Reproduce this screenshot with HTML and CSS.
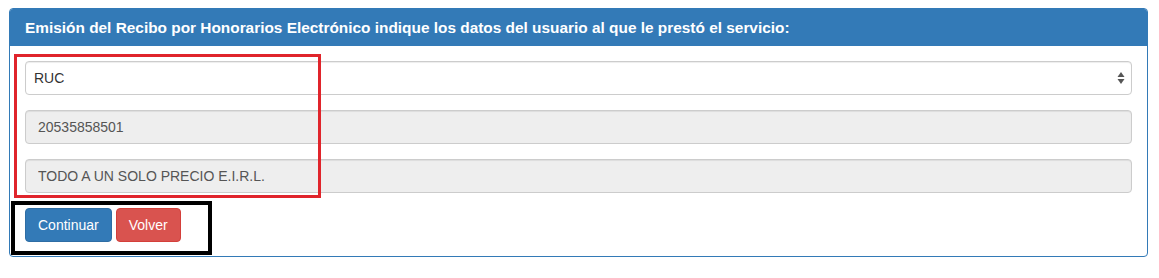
FILE: index.html
```html
<!DOCTYPE html>
<html lang="es">
<head>
<meta charset="utf-8">
<title>Emisión del Recibo por Honorarios Electrónico</title>
<link rel="stylesheet" href="styles.css">
</head>
<body>
<div class="page">
  <div class="panel">
    <div class="panel-heading">Emisión del Recibo por Honorarios Electrónico indique los datos del usuario al que le prestó el servicio:</div>
    <div class="panel-body">
      <div class="form-group select-wrap">
        <select class="form-control select">
          <option>RUC</option>
        </select>
        <svg class="select-arrows" width="8" height="14" viewBox="0 0 8 14"><path d="M4 1 L7.5 6 L0.5 6 Z" fill="#555"/><path d="M4 13 L7.5 8 L0.5 8 Z" fill="#555"/></svg>
      </div>
      <div class="form-group">
        <input class="form-control" type="text" value="20535858501" disabled>
      </div>
      <div class="form-group">
        <input class="form-control" type="text" value="TODO A UN SOLO PRECIO E.I.R.L." disabled>
      </div>
      <div class="actions">
        <button class="btn btn-primary">Continuar</button>
        <button class="btn btn-danger">Volver</button>
      </div>
    </div>
  </div>
  <div class="mark mark-red"></div>
  <div class="mark mark-black"></div>
</div>
</body>
</html>
```
FILE: styles.css
```css
* { box-sizing: border-box; }
html, body { margin: 0; padding: 0; background: #fff; }
body {
  font-family: "Liberation Sans", Arial, Helvetica, sans-serif;
  font-size: 14px;
  color: #555;
}
.page {
  position: relative;
  width: 1159px;
  height: 278px;
  padding: 8px 11px 0 9px;
}
.panel {
  border: 1px solid #337ab7;
  border-radius: 4px;
  background: #fff;
}
.panel-heading {
  background: #337ab7;
  color: #fff;
  font-weight: bold;
  font-size: 15.4px;
  line-height: 17px;
  padding: 10px 15px 10px 15px;
  border-top-left-radius: 3px;
  border-top-right-radius: 3px;
}
.panel-body {
  padding: 15px 15px 14px 15px;
}
.form-group {
  margin-bottom: 15px;
}
.select-wrap { position: relative; }
.form-control {
  display: block;
  width: 100%;
  height: 34px;
  padding: 6px 12px;
  font-family: "Liberation Sans", Arial, Helvetica, sans-serif;
  font-size: 14px;
  line-height: 20px;
  color: #555;
  background: #fff;
  border: 1px solid #ccc;
  border-radius: 4px;
  box-shadow: inset 0 1px 1px rgba(0,0,0,.075);
  margin: 0;
}
.select {
  -webkit-appearance: none;
  appearance: none;
  padding-left: 8px;
  color: #333;
}
.select-arrows {
  position: absolute;
  right: 7px;
  top: 10px;
}
input.form-control[disabled] {
  background: #eee;
  color: #555;
  opacity: 1;
  -webkit-text-fill-color: #555;
}
.actions {
  display: flex;
  gap: 4px;
}
.btn {
  height: 34px;
  padding: 6px 12px;
  font-family: "Liberation Sans", Arial, Helvetica, sans-serif;
  font-size: 14px;
  line-height: 20px;
  color: #fff;
  border: 1px solid transparent;
  border-radius: 4px;
  cursor: pointer;
}
.btn-primary { background: #337ab7; border-color: #2e6da4; }
.btn-danger { background: #d9534f; border-color: #d43f3a; }
.mark {
  position: absolute;
  pointer-events: none;
}
.mark-red {
  left: 14px;
  top: 54px;
  width: 307px;
  height: 144px;
  border: 3px solid #e0242b;
}
.mark-black {
  left: 11px;
  top: 201px;
  width: 201px;
  height: 54px;
  border: 4px solid #000;
}
```
